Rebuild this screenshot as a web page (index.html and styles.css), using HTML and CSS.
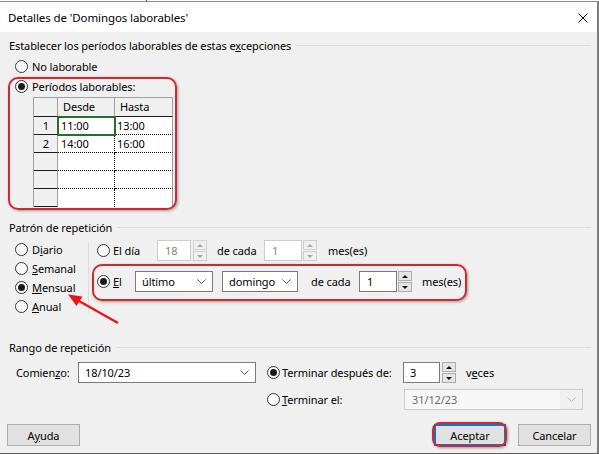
FILE: index.html
```html
<!DOCTYPE html>
<html lang="es">
<head>
<meta charset="utf-8">
<title>Detalles de 'Domingos laborables'</title>
<link rel="stylesheet" href="styles.css">
</head>
<body>
<div class="screen">
  <div class="strip"><span>Establecer el un calendario para</span></div>
  <div class="dialog">
    <div class="titlebar">
      <span class="title">Detalles de 'Domingos laborables'</span>
      <svg class="close" width="10" height="10" viewBox="0 0 10 10"><path d="M0.5 0.5 L9.5 9.5 M9.5 0.5 L0.5 9.5" stroke="#000" stroke-width="1" fill="none"/></svg>
    </div>
    <div class="body">
      <div class="legend l1"><span>Establecer los períodos laborables de estas e<u>x</u>cepciones</span><i class="rule"></i></div>
      <div class="rrow r-no"><span class="radio"></span><span>No laborable</span></div>
      <div class="rrow r-per"><span class="radio on"></span><span>Períodos laborables:</span></div>
      <div class="tbl">
        <div class="c hc"></div>
        <div class="c hc">Desde</div>
        <div class="c hc">Hasta</div>
        <div class="c rh">1</div>
        <div class="c d d1 sel">11:00</div>
        <div class="c d d2">13:00</div>
        <div class="c rh">2</div>
        <div class="c d d1">14:00</div>
        <div class="c d d2">16:00</div>
        <div class="c rh"></div>
        <div class="c d d1"></div>
        <div class="c d d2"></div>
        <div class="c rh"></div>
        <div class="c d d1"></div>
        <div class="c d d2"></div>
        <div class="c rh"></div>
        <div class="c d d1 last"></div>
        <div class="c d d2 last"></div>
      </div>

      <div class="legend l2"><span>Patrón de repetición</span><i class="rule"></i></div>
      <div class="pattern">
        <div class="pleft">
          <div class="rrow p1"><span class="radio"></span><span>D<u>i</u>ario</span></div>
          <div class="rrow p2"><span class="radio"></span><span><u>S</u>emanal</span></div>
          <div class="rrow p2"><span class="radio on"></span><span><u>M</u>ensual</span></div>
          <div class="rrow p2"><span class="radio"></span><span><u>A</u>nual</span></div>
        </div>
        <div class="vsep"></div>
        <div class="pright">
          <div class="frow f1">
            <span class="radio"></span>
            <span class="lbl w-elday">El día</span>
            <div class="input dis w34">18</div>
            <div class="spin dis ml2"><b><i class="up"></i></b><b><i class="dn"></i></b></div>
            <span class="lbl w-cada1">de cada</span>
            <div class="input dis w38">1</div>
            <div class="spin dis ml1"><b><i class="up"></i></b><b><i class="dn"></i></b></div>
            <span class="lbl ml11">mes(es)</span>
          </div>
          <div class="frow f2">
            <span class="radio on"></span>
            <span class="lbl w-el"><u>E</u>l</span>
            <div class="select w78"><span>último</span><svg class="chev" width="9" height="5" viewBox="0 0 9 5"><path d="M0.5 0.5 L4.5 4.5 L8.5 0.5" stroke="#555" fill="none"/></svg></div>
            <div class="select w76 ml9"><span>domingo</span><svg class="chev" width="9" height="5" viewBox="0 0 9 5"><path d="M0.5 0.5 L4.5 4.5 L8.5 0.5" stroke="#555" fill="none"/></svg></div>
            <span class="lbl w-cada2">de cada</span>
            <div class="input w38">1</div>
            <div class="spin ml1"><b><i class="up"></i></b><b><i class="dn"></i></b></div>
            <span class="lbl ml10">mes(es)</span>
          </div>
        </div>
      </div>

      <div class="legend l3"><span>Rango de repetición</span><i class="rule"></i></div>
      <div class="frow g1">
        <span class="lbl w-com">Comien<u>z</u>o:</span>
        <div class="select w178 pad7"><span>18/10/23</span><svg class="chev" width="9" height="5" viewBox="0 0 9 5"><path d="M0.5 0.5 L4.5 4.5 L8.5 0.5" stroke="#555" fill="none"/></svg></div>
        <span class="radio on ml11"></span>
        <span class="lbl w-td">Terminar después de:</span>
        <div class="input w37 pad6">3</div>
        <div class="spin ml2"><b><i class="up"></i></b><b><i class="dn"></i></b></div>
        <span class="lbl ml10">v<u>e</u>ces</span>
      </div>
      <div class="frow g2">
        <span class="radio"></span>
        <span class="lbl w-te"><u>T</u>erminar el:</span>
        <div class="combo-dis"><span class="field">31/12/23</span><svg class="chev" width="9" height="5" viewBox="0 0 9 5"><path d="M0.5 0.5 L4.5 4.5 L8.5 0.5" stroke="#bdbdbd" fill="none"/></svg></div>
      </div>

      <div class="buttons">
        <div class="btn">A<u>y</u>uda</div>
        <div class="spacer"></div>
        <div class="btn default">Aceptar</div>
        <div class="btn cancel">Cancelar</div>
      </div>
    </div>
  </div>

  <div class="ann ann1"></div>
  <div class="ann ann2"></div>
  <div class="ann ann3"></div>
  <svg class="arrow" width="70" height="45" viewBox="0 0 70 45">
    <line x1="58" y1="38" x2="19" y2="16" stroke="#e8161d" stroke-width="2.5"/>
    <polygon points="8,9.5 22.5,11.5 16.5,21" fill="#e8161d"/>
  </svg>
</div>
</body>
</html>
```
FILE: styles.css
```css
* { box-sizing: border-box; }
html, body { margin: 0; padding: 0; }
body {
  width: 599px;
  height: 454px;
  overflow: hidden;
  background: #fff;
  color: #000;
  font-family: "Noto Sans", "Open Sans", "DejaVu Sans", sans-serif;
  font-size: 11px;
  letter-spacing: -0.1px;
}
u { text-decoration: underline; text-underline-offset: 1px; }

.screen { position: relative; width: 599px; height: 454px; }

.strip { height: 1px; overflow: hidden; background: #fff; }
.strip span { display: block; margin-top: -12px; line-height: 13px; padding-left: 6px; color: #333; }

.dialog {
  width: 599px;
  height: 453px;
  border-top: 1px solid #8a8a8a;
  border-right: 2px solid #7d7d7d;
  border-bottom: 1px solid #5c5c5c;
  display: flex;
  flex-direction: column;
}
.titlebar {
  flex: none;
  height: 30px;
  background: #fff;
  display: flex;
  align-items: center;
  padding: 0 9px 0 8px;
}
.title { flex: 1; font-size: 11.5px; }
.close { display: block; margin-top: 1px; }

.body {
  flex: 1;
  background: #f0f0f0;
  display: flex;
  flex-direction: column;
}

.legend {
  display: flex;
  height: 16px;
  line-height: 16px;
  padding: 0 6px 0 9px;
  white-space: nowrap;
}
.legend .rule { flex: 1; height: 1px; background: #dcdcdc; margin: 7px 0 0 5px; }
.l1 { margin-top: 6px; }
.l2 { margin-top: 13px; }
.l3 { margin-top: 26px; }

.rrow { display: flex; align-items: center; height: 16px; gap: 4px; white-space: nowrap; }
.r-no { margin: 4px 0 0 15px; }
.r-per { margin: 4px 0 0 15px; }

.radio {
  flex: none;
  position: relative;
  width: 13px;
  height: 13px;
  border: 1px solid #333;
  border-radius: 50%;
  background: #fff;
}
.radio.on::after {
  content: "";
  position: absolute;
  left: 2px;
  top: 2px;
  width: 7px;
  height: 7px;
  border-radius: 50%;
  background: #1a1a1a;
}

/* grid table */
.tbl {
  margin: 3px 0 0 33px;
  width: 140px;
  display: grid;
  grid-template-columns: 24px 57px 58px;
  grid-template-rows: 19px 18px 18px 18px 18px 18px;
  border-top: 1px solid #a0a0a0;
  border-left: 1px solid #a0a0a0;
}
.c { line-height: 17px; white-space: nowrap; }
.hc { background: #f0f0f0; border-right: 1px solid #a0a0a0; border-bottom: 1px solid #1a1a1a; padding-left: 5px; }
.rh { background: #f0f0f0; border-right: 1px solid #a0a0a0; border-bottom: 1px solid #1a1a1a; text-align: right; padding-right: 8px; }
.d { background: #fff; border-bottom: 1px dotted #000; padding-left: 2px; }
.d1 { border-right: 1px dotted #000; padding-left: 3px; }
.d2 { border-right: 1px solid #a0a0a0; }
.d.last { border-bottom: none; }
.sel { position: relative; z-index: 1; outline: 2px solid #2a6b30; outline-offset: -1px; }

/* pattern */
.pattern { display: flex; height: 78px; }
.pleft { width: 88px; padding-left: 15px; }
.p1 { margin-top: 5px; }
.p2 { margin-top: 3px; }
.vsep { width: 1px; height: 71px; margin-top: 6px; background: #dcdcdc; }
.pright { padding-left: 8px; }

.frow { display: flex; align-items: center; height: 21px; white-space: nowrap; }
.f1 { margin-top: 4px; }
.f2 { margin-top: 10px; }
.g1 { margin-top: 6px; padding-left: 16px; }
.g2 { margin-top: 6px; padding-left: 267px; }

.lbl { flex: none; }
.w-elday { margin-left: 3px; width: 44px; }
.w-el { margin-left: 3px; width: 22px; }
.w-cada1 { margin-left: 10px; width: 47px; }
.w-cada2 { margin-left: 13px; width: 48px; }
.w-com { width: 62px; }
.w-td { margin-left: 2px; width: 121px; }
.w-te { margin-left: 2px; width: 122px; }
.ml1 { margin-left: 1px; }
.ml2 { margin-left: 2px; }
.ml9 { margin-left: 9px; }
.ml10 { margin-left: 10px; }
.ml11 { margin-left: 11px; }

.input {
  flex: none;
  height: 21px;
  border: 1px solid #7a7a7a;
  background: #fff;
  display: flex;
  align-items: center;
  padding-left: 7px;
}
.input.dis { border-color: #cccccc; color: #838383; }
.pad6 { padding-left: 6px; }
.pad7 { padding-left: 7px; }
.w34 { width: 34px; }
.w37 { width: 37px; }
.w38 { width: 38px; }
.w76 { width: 76px; }
.w78 { width: 78px; }
.w178 { width: 178px; }

.spin { flex: none; width: 14px; height: 21px; display: flex; flex-direction: column; gap: 1px; }
.spin b {
  flex: 1;
  border: 1px solid #adadad;
  background: #e5e5e5;
  display: flex;
  align-items: center;
  justify-content: center;
}
.spin.dis b { border-color: #d0d0d0; background: #f0f0f0; }
.spin i { display: block; width: 0; height: 0; border-left: 3px solid transparent; border-right: 3px solid transparent; }
.spin i.up { border-bottom: 3px solid #111; }
.spin i.dn { border-top: 3px solid #111; }
.spin.dis i.up { border-bottom-color: #a8a8a8; }
.spin.dis i.dn { border-top-color: #a8a8a8; }

.select {
  flex: none;
  height: 21px;
  border: 1px solid #7a7a7a;
  background: #fff;
  display: flex;
  align-items: center;
  justify-content: space-between;
  padding: 0 6px;
}
.chev { display: block; flex: none; }

.combo-dis {
  flex: none;
  width: 179px;
  height: 21px;
  border: 1px solid #cccccc;
  background: #f0f0f0;
  display: flex;
  align-items: center;
  padding-right: 6px;
  color: #6d6d6d;
}
.combo-dis .field {
  flex: 1;
  align-self: stretch;
  display: flex;
  align-items: center;
  padding-left: 7px;
  margin-right: 7px;
  background: #f7f7f7;
}

.buttons { display: flex; margin-top: 14px; padding: 0 6px 0 7px; }
.spacer { flex: 1; }
.btn {
  flex: none;
  width: 73px;
  height: 22px;
  border: 1px solid #adadad;
  background: #e1e1e1;
  display: flex;
  align-items: center;
  justify-content: center;
}
.btn.default { width: 72px; border: 2px solid #0078d7; }
.btn.cancel { margin-left: 12px; }

/* annotations (overlay) */
.ann {
  position: absolute;
  border: 2px solid #d0282e;
  border-radius: 10px;
  box-shadow: 1px 1px 3px rgba(0, 0, 0, 0.35);
  pointer-events: none;
}
.ann1 { left: 8px; top: 77px; width: 169px; height: 133px; }
.ann2 { left: 92px; top: 264px; width: 375px; height: 37px; }
.ann3 { left: 432px; top: 422px; width: 75px; height: 25px; border-radius: 8px; }
.arrow { position: absolute; left: 60px; top: 285px; }
```
